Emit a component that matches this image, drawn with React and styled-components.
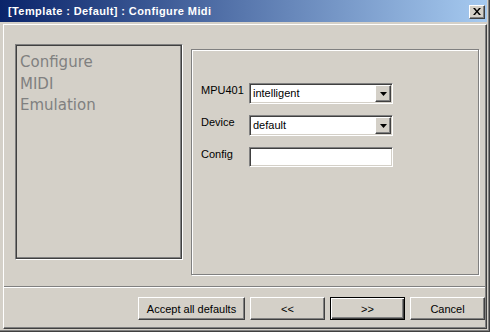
import React from "react";
import styled, { createGlobalStyle, css } from "styled-components";

const GlobalStyle = createGlobalStyle`
  html, body {
    margin: 0;
    padding: 0;
    background: #d4d0c8;
  }
  body {
    font-family: "Liberation Sans", Arial, sans-serif;
    font-size: 11px;
    color: #000;
  }
`;

const raised = css`
  border: 1px solid;
  border-color: #fff #404040 #404040 #fff;
  box-shadow: inset -1px -1px 0 #808080;
`;

const sunken = css`
  border: 1px solid;
  border-color: #808080 #fff #fff #808080;
  box-shadow: inset 1px 1px 0 #404040, inset -1px -1px 0 #d4d0c8;
`;

const Window = styled.div`
  width: 490px;
  height: 332px;
  box-sizing: border-box;
  background: #d4d0c8;
  border-right: 1px solid #404040;
  border-bottom: 1px solid #404040;
  box-shadow: inset -1px -1px 0 #808080;
  display: flex;
  flex-direction: column;
  overflow: hidden;
`;

const TitleBar = styled.div`
  height: 22px;
  margin-right: 2px;
  padding: 0 2px 0 8px;
  box-sizing: border-box;
  display: flex;
  align-items: center;
  justify-content: space-between;
  background: linear-gradient(to right, #0a246a, #a6caf0);
`;

const TitleText = styled.span`
  color: #fff;
  font-weight: bold;
  font-size: 11px;
  letter-spacing: 0.4px;
  white-space: nowrap;
`;

const CloseButton = styled.div`
  ${raised};
  width: 16px;
  height: 14px;
  box-sizing: border-box;
  margin-top: 1px;
  background: #d4d0c8;
  display: flex;
  align-items: center;
  justify-content: center;
`;

const Frame = styled.div`
  flex: 1;
  margin: 2px 2px 2px 3px;
  border: 1px solid;
  border-color: #fff #404040 #404040 #fff;
  box-shadow: inset -1px -1px 0 #808080;
  display: flex;
  flex-direction: column;
`;

const Page = styled.div`
  height: 261px;
  box-sizing: border-box;
  padding: 19px 0 0 11px;
  display: flex;
  gap: 8px;
  align-items: flex-start;
`;

const SidePanel = styled.div`
  width: 168px;
  height: 216px;
  box-sizing: border-box;
  border: 1px solid;
  border-color: #808080 #fff #fff #808080;
  box-shadow: inset 0 0 0 1px #404040, inset -2px -2px 0 #808080;
  padding: 7px 4px;
`;

const SideLine = styled.div`
  font-family: "DejaVu Sans", sans-serif;
  font-size: 15px;
  line-height: 21.5px;
  color: #808080;
`;

const GroupPanel = styled.div`
  margin-top: 5px;
  width: 288px;
  height: 226px;
  box-sizing: border-box;
  border: 1px solid #808080;
  box-shadow: 1px 1px 0 #fff, inset 1px 1px 0 #fff;
  padding: 33px 0 0 9px;
`;

const Form = styled.div`
  display: grid;
  grid-template-columns: 48px 144px;
  row-gap: 11px;
  align-items: start;
`;

const Label = styled.div`
  padding-top: 1px;
  line-height: 13px;
  white-space: nowrap;
`;

const Field = styled.div`
  ${sunken};
  height: ${(p) => p.$h || 21}px;
  box-sizing: border-box;
  background: #fff;
  display: flex;
  align-items: stretch;
  padding: 1px;
`;

const FieldText = styled.div`
  flex: 1;
  padding-left: 2px;
  line-height: 17px;
`;

const DropButton = styled.div`
  ${raised};
  width: 16px;
  box-sizing: border-box;
  background: #d4d0c8;
  display: flex;
  align-items: center;
  justify-content: center;
`;

const Separator = styled.div`
  height: 0;
  border-top: 1px solid #808080;
  border-bottom: 1px solid #fff;
  margin-right: 1px;
`;

const ButtonRow = styled.div`
  display: flex;
  justify-content: flex-end;
  gap: 5px;
  padding: 9px 1px 0 0;
`;

const Button = styled.div`
  ${raised};
  width: ${(p) => p.$w || 75}px;
  height: 23px;
  box-sizing: border-box;
  display: flex;
  align-items: center;
  justify-content: center;
  white-space: nowrap;
  ${(p) =>
    p.$default &&
    css`
      border: 1px solid #000;
      box-shadow: inset 1px 1px 0 #fff, inset -1px -1px 0 #404040,
        inset -2px -2px 0 #808080;
    `}
`;

const Arrow = () => (
  <svg width="7" height="4" viewBox="0 0 7 4">
    <path d="M0 0h7L3.5 4z" fill="#000" />
  </svg>
);

const CloseGlyph = () => (
  <svg width="8" height="7" viewBox="0 0 8 7">
    <path d="M0 0h2l2 2.5L6 0h2L5 3.5 8 7H6L4 4.5 2 7H0l3-3.5z" fill="#000" />
  </svg>
);

const Select = ({ value }) => (
  <Field>
    <FieldText>{value}</FieldText>
    <DropButton>
      <Arrow />
    </DropButton>
  </Field>
);

const App = () => {
  return (
    <>
      <GlobalStyle />
      <Window>
        <TitleBar>
          <TitleText>[Template : Default] : Configure Midi</TitleText>
          <CloseButton>
            <CloseGlyph />
          </CloseButton>
        </TitleBar>
        <Frame>
          <Page>
            <SidePanel>
              <SideLine>Configure</SideLine>
              <SideLine>MIDI</SideLine>
              <SideLine>Emulation</SideLine>
            </SidePanel>
            <GroupPanel>
              <Form>
                <Label>MPU401</Label>
                <Select value="intelligent" />
                <Label>Device</Label>
                <Select value="default" />
                <Label>Config</Label>
                <Field $h={20} />
              </Form>
            </GroupPanel>
          </Page>
          <Separator />
          <ButtonRow>
            <Button $w={107}>Accept all defaults</Button>
            <Button>&lt;&lt;</Button>
            <Button $default>&gt;&gt;</Button>
            <Button>Cancel</Button>
          </ButtonRow>
        </Frame>
      </Window>
    </>
  );
};

export default App;
